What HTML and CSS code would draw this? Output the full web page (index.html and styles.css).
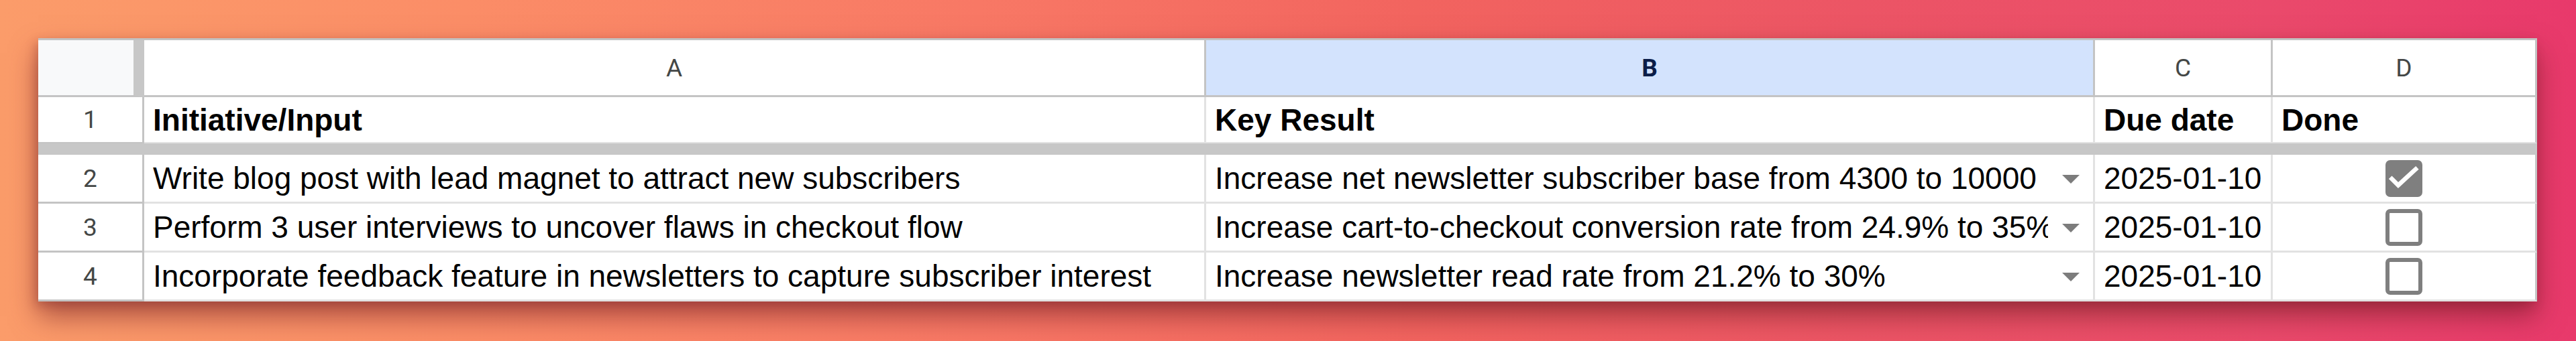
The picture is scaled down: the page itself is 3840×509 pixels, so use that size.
FILE: index.html
```html
<!DOCTYPE html>
<html lang="en">
<head>
<meta charset="utf-8">
<title>OKR sheet</title>
<link rel="stylesheet" href="styles.css">
</head>
<body>
<div class="sheet">
  <div class="row hdr">
    <div class="cell corner"></div>
    <div class="cell colhdr">A</div>
    <div class="cell colhdr sel">B</div>
    <div class="cell colhdr">C</div>
    <div class="cell colhdr edge">D</div>
  </div>
  <div class="row r1">
    <div class="cell rowhdr">1</div>
    <div class="cell data bold">Initiative/Input</div>
    <div class="cell data bold">Key Result</div>
    <div class="cell data bold">Due date</div>
    <div class="cell data bold edge">Done</div>
  </div>
  <div class="freeze"></div>
  <div class="row body">
    <div class="cell rowhdr">2</div>
    <div class="cell data">Write blog post with lead magnet to attract new subscribers</div>
    <div class="cell data drop"><span class="txt">Increase net newsletter subscriber base from 4300 to 10000</span><span class="arrow"></span></div>
    <div class="cell data">2025-01-10</div>
    <div class="cell data check edge"><span class="box on"><svg viewBox="0 0 55 55" width="55" height="55"><polyline points="9.5,28 19,37.5 45,13.5" fill="none" stroke="#fff" stroke-width="6.5" stroke-linecap="square"/></svg></span></div>
  </div>
  <div class="row body">
    <div class="cell rowhdr">3</div>
    <div class="cell data">Perform 3 user interviews to uncover flaws in checkout flow</div>
    <div class="cell data drop"><span class="txt">Increase cart-to-checkout conversion rate from 24.9% to 35%</span><span class="arrow"></span></div>
    <div class="cell data">2025-01-10</div>
    <div class="cell data check edge"><span class="box"></span></div>
  </div>
  <div class="row body last">
    <div class="cell rowhdr">4</div>
    <div class="cell data">Incorporate feedback feature in newsletters to capture subscriber interest</div>
    <div class="cell data drop"><span class="txt">Increase newsletter read rate from 21.2% to 30%</span><span class="arrow"></span></div>
    <div class="cell data">2025-01-10</div>
    <div class="cell data check edge"><span class="box"></span></div>
  </div>
</div>
</body>
</html>
```

FILE: styles.css
```css
* { box-sizing: border-box; }
html, body { margin: 0; height: 100%; }
body {
  width: 3840px;
  height: 509px;
  overflow: hidden;
  padding: 57px 0 0 57px;
  background: linear-gradient(to right, #fb9c6a 0%, #fb8d67 18%, #f87865 38%, #f2645f 55%, #ec5565 72%, #ea4a6b 88%, #e8396b 100%);
  font-family: "Liberation Sans", Arial, sans-serif;
}
.sheet {
  width: 3725px;
  background: #fff;
  border-top: 3px solid #c2c2c2;
  box-shadow: 0 22px 38px rgba(110, 25, 35, 0.55), -4px 6px 14px rgba(110, 25, 35, 0.25);
}
.row {
  display: grid;
  grid-template-columns: 158px 1583px 1325px 265px 394px;
}
.cell {
  display: flex;
  align-items: center;
  white-space: nowrap;
  overflow: hidden;
  border-right: 3px solid #e2e2e2;
  border-bottom: 3px solid #e2e2e2;
}
.hdr { height: 85px; }
.hdr .cell {
  justify-content: center;
  font-family: Roboto, "Liberation Sans", sans-serif;
  font-size: 37px;
  color: #444746;
  border-right-color: #c4c4c4;
  border-bottom-color: #c4c4c4;
}
.hdr .corner {
  background: #f8f9fa;
  border-right: 16px solid #c7c7c7;
}
.hdr .sel {
  background: #d3e3fd;
  color: #0b1d48;
  font-weight: 700;
}
.r1 { height: 69px; }
.r1 .cell { border-bottom-width: 2px; }
.freeze { height: 17px; background: #c7c7c7; }
.body { height: 73px; }
.rowhdr {
  justify-content: center;
  font-family: Roboto, "Liberation Sans", sans-serif;
  font-size: 37px;
  color: #444746;
  border-right-color: #c4c4c4;
  border-bottom-color: #c4c4c4;
}
.data {
  padding-left: 13px;
  font-size: 46px;
  color: #000;
}
.bold { font-weight: 700; }
.edge { border-right-color: #c6c6c6; }
.drop { padding-right: 20px; }
.drop .txt {
  flex: 1;
  min-width: 0;
  overflow: hidden;
}
.arrow {
  flex: none;
  margin-left: 21px;
  width: 0;
  height: 0;
  border-left: 13px solid transparent;
  border-right: 13px solid transparent;
  border-top: 13px solid #7c7c7c;
  margin-top: 2px;
}
.check { justify-content: center; padding-left: 0; }
.box {
  display: block;
  width: 55px;
  height: 55px;
  border: 6px solid #7f7f7f;
  border-radius: 7px;
  background: #fff;
}
.box.on {
  border: none;
  background: #7f7f7f;
}
.box svg { display: block; }
```
